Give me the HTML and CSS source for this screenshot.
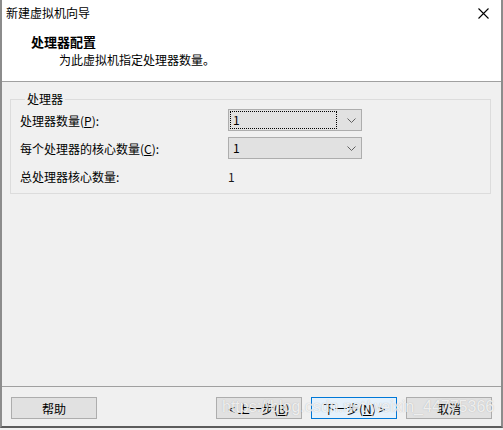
FILE: index.html
```html
<!DOCTYPE html>
<html lang="zh-CN">
<head>
    <meta charset="UTF-8">
    <title>新建虚拟机向导</title>
    <link rel="stylesheet" href="styles.css">
</head>
<body>
    <div class="window">
        <!-- 标题栏 -->
        <div class="titlebar">
            <span class="title">新建虚拟机向导</span>
            <svg class="close" width="11" height="11" viewBox="0 0 11 11">
                <path d="M0.5 0.5 L10.5 10.5 M10.5 0.5 L0.5 10.5" stroke="#000" stroke-width="1.1" fill="none"/>
            </svg>
        </div>

        <!-- 页头 -->
        <div class="header">
            <div class="header-title">处理器配置</div>
            <div class="header-sub">为此虚拟机指定处理器数量。</div>
        </div>

        <!-- 内容 -->
        <div class="content">
            <fieldset class="group">
                <legend>处理器</legend>
                <div class="row">
                    <label>处理器数量(<u>P</u>):</label>
                    <div class="combo">
                        <span class="combo-value focused">1</span>
                        <svg class="chevron" width="9" height="5" viewBox="0 0 9 5">
                            <polyline points="0.5,0.5 4.5,4.5 8.5,0.5" stroke="#606060" fill="none"/>
                        </svg>
                    </div>
                </div>
                <div class="row">
                    <label>每个处理器的核心数量(<u>C</u>):</label>
                    <div class="combo">
                        <span class="combo-value">1</span>
                        <svg class="chevron" width="9" height="5" viewBox="0 0 9 5">
                            <polyline points="0.5,0.5 4.5,4.5 8.5,0.5" stroke="#606060" fill="none"/>
                        </svg>
                    </div>
                </div>
                <div class="row">
                    <label>总处理器核心数量:</label>
                    <span class="total">1</span>
                </div>
            </fieldset>
        </div>

        <!-- 按钮 -->
        <div class="footer">
            <button class="btn">帮助</button>
            <div class="spacer"></div>
            <button class="btn">&lt; 上一步(<u>B</u>)</button>
            <button class="btn btn-default">下一步(<u>N</u>) &gt;</button>
            <button class="btn">取消</button>
            <div class="watermark">https://blog.csdn.net/weixin_44775366</div>
        </div>
    </div>
</body>
</html>
```

FILE: styles.css
```css
body {
    margin: 0;
    width: 503px;
    height: 430px;
    overflow: hidden;
    background-color: #f0f0f0;
    font-family: "Noto Sans CJK SC", "Noto Sans", sans-serif;
    font-size: 12px;
    color: #000;
}

.window {
    height: 426px;
    display: flex;
    flex-direction: column;
    border-left: 2px solid #8c8c8c;
    border-right: 2px solid #8c8c8c;
    border-bottom: 2px solid #5c5c5c;
    background-color: #f0f0f0;
}

.titlebar {
    height: 30px;
    background-color: #fff;
    display: flex;
    align-items: flex-start;
    justify-content: space-between;
    padding: 0 12px 0 4px;
}

.title {
    line-height: 26px;
}

.close {
    margin-top: 8px;
}

.header {
    background-color: #fff;
    padding: 4px 0 13px 29px;
    border-bottom: 1px solid #a0a0a0;
}

.header-title {
    font-weight: bold;
    font-size: 13px;
    line-height: 16px;
}

.header-sub {
    margin-top: 2px;
    padding-left: 28px;
    line-height: 16px;
}

.content {
    flex: 1;
    padding: 9px 10px 0 8px;
}

.group {
    margin: 0;
    padding: 2px 8px 6px 9px;
    border: 1px solid #dcdcdc;
}

.group legend {
    padding: 0 2px;
    margin-left: 5px;
    line-height: 16px;
}

.row {
    display: flex;
    align-items: center;
    height: 22px;
    margin-bottom: 6px;
}

.row:last-child {
    margin-bottom: 0;
}

.row label {
    width: 208px;
}

.combo {
    width: 134px;
    height: 22px;
    box-sizing: border-box;
    border: 1px solid #adadad;
    background-color: #e1e1e1;
    display: flex;
    align-items: center;
    padding: 0 5px 0 1px;
}

.combo-value {
    flex: 1;
    height: 16px;
    line-height: 16px;
    padding-left: 2px;
    margin-right: 10px;
    border: 1px dotted transparent;
}

.combo-value.focused {
    border-color: #000;
}

.chevron {
    flex: none;
}

.total {
    color: #1a1a1a;
}

.footer {
    position: relative;
    height: 29px;
    border-top: 1px solid #a0a0a0;
    display: flex;
    padding: 10px 9px 0 9px;
    gap: 9px;
}

.spacer {
    flex: 1;
}

.btn {
    width: 86px;
    height: 22px;
    border: 1px solid #adadad;
    background-color: #e1e1e1;
    font-family: "Noto Sans CJK SC", "Noto Sans", sans-serif;
    font-size: 12px;
    padding: 0;
    color: #000;
}

.btn-default {
    border-color: #0078d7;
    background-color: #e5f1fb;
}

.watermark {
    position: absolute;
    left: 220px;
    top: 8px;
    font-family: "Liberation Sans", Arial, sans-serif;
    font-size: 16px;
    line-height: 24px;
    color: rgba(255, 255, 255, 0.8);
    text-shadow: 0 0 1px rgba(120, 120, 120, 0.5);
    pointer-events: none;
    white-space: nowrap;
}
```
